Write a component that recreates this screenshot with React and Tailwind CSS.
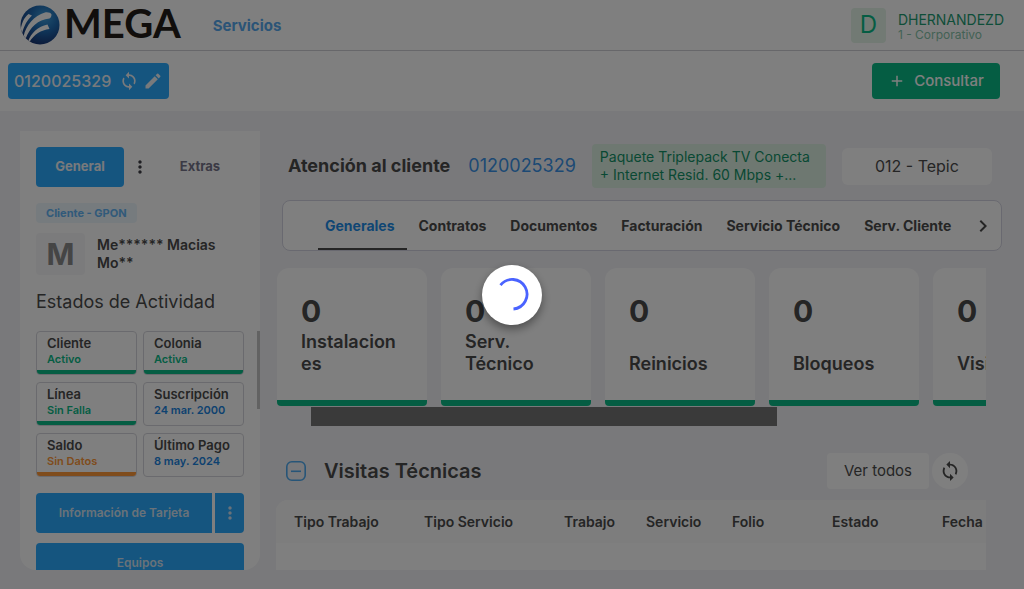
import { MdSync, MdEdit, MdMoreVert, MdChevronRight, MdAdd } from "react-icons/md";

const STATUSES = [
  { label: "Cliente", value: "Activo", tone: "ok" },
  { label: "Colonia", value: "Activa", tone: "ok" },
  { label: "Línea", value: "Sin Falla", tone: "ok" },
  { label: "Suscripción", value: "24 mar. 2000", tone: "info" },
  { label: "Saldo", value: "Sin Datos", tone: "warn" },
  { label: "Último Pago", value: "8 may. 2024", tone: "info" },
];

const TONES = {
  ok: { text: "text-[#0abb87]", bar: "bg-[#0abb87]" },
  info: { text: "text-[#1b84e0]", bar: "" },
  warn: { text: "text-[#ff9838]", bar: "bg-[#ff9838]" },
};

const TABS = ["Contratos", "Documentos", "Facturación", "Servicio Técnico", "Serv. Cliente"];

const CARDS = ["Instalaciones", "Serv. Técnico", "Reinicios", "Bloqueos", "Visitas"];

const COLUMNS = [
  { name: "Tipo Trabajo", width: "w-[130px]" },
  { name: "Tipo Servicio", width: "w-[140px]" },
  { name: "Trabajo", width: "w-[82px]" },
  { name: "Servicio", width: "w-[86px]" },
  { name: "Folio", width: "w-[100px]" },
  { name: "Estado", width: "w-[110px]" },
  { name: "Fecha", width: "w-[120px]" },
];

function Logo() {
  return (
    <a href="#inicio" aria-label="MEGA" className="flex items-start gap-1 text-[#231c18]">
      <svg viewBox="0 0 40 40" className="size-10" aria-hidden="true">
        <defs>
          <radialGradient id="globe" cx="0.62" cy="0.3" r="0.75">
            <stop offset="0" stopColor="#3f9fdc" />
            <stop offset="0.45" stopColor="#1f6cb4" />
            <stop offset="1" stopColor="#16306e" />
          </radialGradient>
          <clipPath id="globe-clip">
            <circle cx="20" cy="20" r="19.5" />
          </clipPath>
        </defs>
        <circle cx="20" cy="20" r="19.5" fill="url(#globe)" />
        <g fill="#fff" clipPath="url(#globe-clip)">
          <path d="M0.500 27 C1 19 4 12.500 8.500 9 L12 10.500 C7.500 15 4 20 2 29 Z" />
          <path d="M3.500 31.500 C6 20 14 11 25 7.500 C28 7 31 8 31.500 9.500 C31.500 11 31 12.500 29.500 13.500 C18 14.500 10 22 5.500 34 Z" />
          <path d="M8 36.500 C11 28 18 21.500 27.500 19.500 L29.500 24 C21 25 14 29.500 9.500 37 Z" />
        </g>
      </svg>
      <span className="font-['Lato',sans-serif] text-[40px] leading-9 font-bold">MEGA</span>
    </a>
  );
}

function Header() {
  return (
    <header className="flex h-[51px] shrink-0 items-center border-b border-[#cfcfd4] bg-white px-5">
      <Logo />
      <nav className="ml-8">
        <a href="#servicios" className="text-[15px] font-bold text-[#56a9ee]">Servicios</a>
      </nav>
      <div className="ml-auto flex items-center gap-3">
        <span className="flex size-[35px] items-center justify-center rounded bg-[#e4f5e8] text-2xl text-[#0abb87]">D</span>
        <div className="pt-1">
          <p className="text-sm leading-4 text-[#1d9c73]">DHERNANDEZD</p>
          <p className="text-xs leading-[14px] text-[#86c4aa]">1 - Corporativo</p>
        </div>
      </div>
    </header>
  );
}

function Toolbar() {
  return (
    <div className="flex h-[60px] shrink-0 items-center justify-between bg-white pr-6 pl-2">
      <div className="flex h-9 items-center rounded bg-[#2baaff] px-1.5 text-[#f0f4f8]">
        <span className="text-base font-medium">0120025329</span>
        <button type="button" aria-label="Actualizar" className="ml-2">
          <MdSync className="size-5" />
        </button>
        <button type="button" aria-label="Editar" className="ml-1">
          <MdEdit className="size-5" />
        </button>
      </div>
      <button type="button" className="flex h-9 w-32 items-center justify-center gap-2 rounded bg-[#0abb87] text-[15px] font-medium text-white">
        <MdAdd className="size-[18px]" />
        Consultar
      </button>
    </div>
  );
}

function StatusCard({ label, value, tone }) {
  const { text, bar } = TONES[tone];
  return (
    <div className="flex h-11 flex-col overflow-hidden rounded border border-[#d5d5dc]">
      <p className="px-2.5 pt-[3px] text-[13px] leading-4 font-semibold text-[#4b4b4b]">{label}</p>
      <p className={`px-2.5 text-[11px] leading-4 font-semibold ${text}`}>{value}</p>
      {bar && <div className={`mt-auto h-1 ${bar}`} />}
    </div>
  );
}

function Sidebar() {
  return (
    <aside className="flex w-60 shrink-0 flex-col overflow-hidden rounded-b-2xl bg-white pt-4">
      <div className="grid grid-cols-[88px_32px_88px] items-center px-4 text-[13px] font-bold">
        <button type="button" className="h-10 rounded bg-[#2baaff] text-[#f0f4f8]">General</button>
        <button type="button" aria-label="Más opciones" className="flex justify-center text-[#3f3f46]">
          <MdMoreVert className="size-5" />
        </button>
        <button type="button" className="h-10 text-[#77758a]">Extras</button>
      </div>

      <div className="px-4 pt-4">
        <span className="flex h-5 w-fit items-center rounded bg-[#edf6fd] px-2.5 text-[11px] font-bold text-[#62b5f5]">Cliente - GPON</span>
      </div>

      <div className="flex items-center gap-3 px-4 pt-2.5">
        <span className="flex h-[42px] w-[49px] shrink-0 items-center justify-center rounded bg-[#f6f6f9] text-3xl font-bold text-[#8a8a8a]">M</span>
        <p className="text-sm leading-[18px] font-semibold text-[#4b4b4b]">
          Me****** Macias
          <br />
          Mo**
        </p>
      </div>

      <h2 className="px-4 pt-[13px] pb-[15px] text-lg text-[#4b4b4b]">Estados de Actividad</h2>

      <div className="relative min-h-0 flex-1 overflow-hidden px-4">
        <div className="absolute top-0 right-0 h-[78px] w-[3px] bg-[#c4c4c4]" />
        <div className="grid grid-cols-2 gap-x-1.5 gap-y-[7px]">
          {STATUSES.map((status) => (
            <StatusCard key={status.label} {...status} />
          ))}
        </div>
        <div className="mt-4 flex gap-[3px] text-xs font-semibold text-[#d3e4f2]">
          <button type="button" className="h-10 flex-1 rounded-l bg-[#2baaff]">Información de Tarjeta</button>
          <button type="button" aria-label="Más acciones" className="flex w-[29px] items-center justify-center rounded-r bg-[#2baaff]">
            <MdMoreVert className="size-5" />
          </button>
        </div>
        <button type="button" className="mt-2.5 h-10 w-full rounded bg-[#2baaff] text-xs font-semibold text-[#d3e4f2]">Equipos</button>
      </div>
    </aside>
  );
}

function MetricCard({ label }) {
  return (
    <article className="flex h-[138px] w-[150px] shrink-0 flex-col rounded-t-xl rounded-b border-b-6 border-[#0abb87] bg-white px-6 pt-6 pb-[25px] text-[#4b4b4b]">
      <p className="text-3xl leading-[38px] font-bold">0</p>
      <p className="mt-auto text-lg leading-[22px] font-semibold wrap-break-word">{label}</p>
    </article>
  );
}

function Main() {
  return (
    <main className="flex min-w-0 flex-1 flex-col overflow-hidden pt-[13px] text-[#4b4b4b]">
      <div className="flex items-center pr-8 pl-3">
        <h1 className="text-lg font-bold whitespace-nowrap">Atención al cliente</h1>
        <a href="#cuenta" className="ml-[18px] text-lg text-[#3b93e8]">0120025329</a>
        <p className="ml-4 w-[234px] rounded bg-[#dcf1e2] px-2 py-1 text-sm leading-[18px] text-[#139268]">
          Paquete Triplepack TV Conecta
          <br />
          + Internet Resid. 60 Mbps +...
        </p>
        <button type="button" className="ml-4 h-[37px] flex-1 rounded-md bg-white text-base">012 - Tepic</button>
      </div>

      <nav className="mt-3 mr-[22px] ml-1.5 flex h-[51px] shrink-0 items-stretch rounded-lg border border-[#d3d3e0] bg-white pr-1.5 pl-[35px] text-sm font-bold">
        <a href="#generales" className="flex items-center border-y-2 border-t-transparent border-b-[#4b4b4b] pr-3 pl-[7px] text-[#1e8de8]">Generales</a>
        {TABS.map((tab) => (
          <a key={tab} href="#seccion" className="flex items-center px-3 whitespace-nowrap">{tab}</a>
        ))}
        <button type="button" aria-label="Siguiente" className="ml-auto">
          <MdChevronRight className="size-6" />
        </button>
      </nav>

      <div className="mt-[17px] mr-[38px] ml-px shrink-0 overflow-hidden">
        <div className="flex gap-3.5">
          {CARDS.map((card) => (
            <MetricCard key={card} label={card} />
          ))}
        </div>
        <div className="mt-px ml-[34px] h-[19px] w-[466px] bg-[#747474]" />
      </div>

      <div className="mt-[27px] mr-[56px] ml-2.5 flex shrink-0 items-center">
        <button type="button" aria-label="Contraer" className="text-[#4fabf0]">
          <svg viewBox="0 0 20 20" className="size-5" fill="none" stroke="currentColor" strokeWidth="1.600">
            <rect x="0.800" y="0.800" width="18.400" height="18.400" rx="5" />
            <path d="M5 10.300h10" />
          </svg>
        </button>
        <h2 className="ml-[18px] text-xl font-semibold">Visitas Técnicas</h2>
        <button type="button" className="ml-auto h-9 w-[102px] rounded bg-white text-[15px]">Ver todos</button>
        <button type="button" aria-label="Recargar" className="ml-[3px] flex size-9 items-center justify-center rounded-full bg-white">
          <MdSync className="size-[22px]" />
        </button>
      </div>

      <div className="mt-[11px] mr-[38px] min-h-0 flex-1 overflow-hidden rounded-tl-xl bg-white">
        <table className="w-[768px] table-fixed text-left text-sm">
          <thead className="bg-[#fafafa]">
            <tr className="h-[43px]">
              {COLUMNS.map(({ name, width }) => (
                <th key={name} scope="col" className={`pl-[18px] font-semibold whitespace-nowrap ${width}`}>{name}</th>
              ))}
            </tr>
          </thead>
        </table>
      </div>
    </main>
  );
}

function LoadingOverlay() {
  return (
    <div role="status" aria-label="Cargando" className="fixed inset-0 flex items-center justify-center bg-black/50">
      <div className="flex size-[60px] items-center justify-center rounded-full bg-white shadow-[0_4px_10px_rgba(0,0,0,0.4)]">
        <svg viewBox="0 0 36 36" className="size-9" fill="none" stroke="#4a63ff" strokeWidth="2.800">
          <path d="M6.500 8.200 A14.800 14.800 0 1 1 19.500 32" />
        </svg>
      </div>
    </div>
  );
}

export default function App() {
  return (
    <div className="flex h-screen flex-col overflow-hidden bg-[#f3f3f7] font-['Inter',sans-serif]">
      <Header />
      <Toolbar />
      <div className="flex min-h-0 flex-1 gap-4 pt-5 pb-[19px] pl-5">
        <Sidebar />
        <Main />
      </div>
      <LoadingOverlay />
    </div>
  );
}
